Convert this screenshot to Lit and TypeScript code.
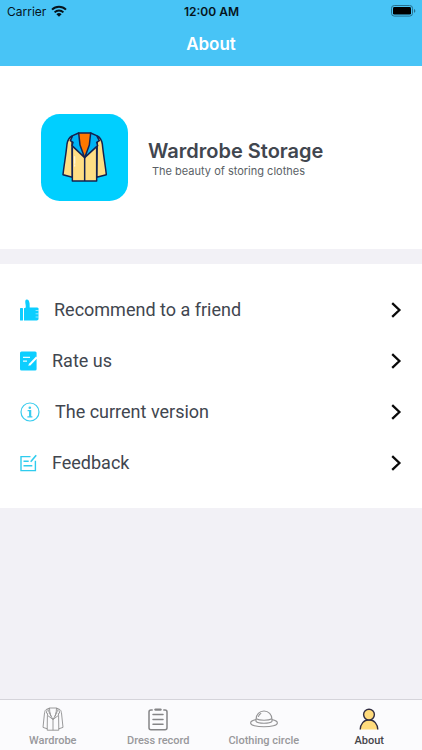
import { LitElement, html, css } from "lit";
import { customElement, state } from "lit/decorators.js";
import { classMap } from "lit/directives/class-map.js";

const wifiIcon = html`<svg width="16" height="12" viewBox="0 0 16 12" aria-hidden="true">
  <g fill="none" stroke="#06141c" stroke-width="2">
    <path d="M1 4.600a10 10 0 0 1 14 0" />
    <path d="M3.600 7.400a6.300 6.300 0 0 1 8.800 0" />
  </g>
  <path d="M5.400 9.200a3.800 3.800 0 0 1 5.200 0L8 11.800z" fill="#06141c" />
</svg>`;

const batteryIcon = html`<svg width="25" height="12" viewBox="0 0 25 12" aria-hidden="true">
  <rect x=".5" y=".5" width="21" height="10.600" rx="2.800" fill="none" stroke="#27708f" />
  <rect x="2" y="2" width="18" height="7.600" rx="1.400" fill="#000" />
  <path d="M23 4v3.800c.8-.3 1.300-1 1.300-1.900S23.800 4.300 23 4z" fill="#27708f" />
</svg>`;

const logo = html`<svg width="87" height="87" viewBox="33 29 261 261" aria-hidden="true">
  <rect x="33" y="29" width="261" height="261" rx="56" fill="#00cfff" />
  <g stroke="#15224f" stroke-width="4.500" stroke-linejoin="round" stroke-linecap="round">
    <path fill="#ffde84" d="M126 95c-10 5-13 13-15 24-3 32-9 64-12 92l28 8z" />
    <path fill="#ffde84" d="M202 95c10 5 13 13 15 24 3 32 9 64 12 92l-29 8z" />
    <path fill="#ffde84" stroke="none" d="M127 95l37 65 36-65v135h-73z" />
    <path fill="none" d="M127 130v100h73V130M164 158v72" />
    <path fill="#ff7800" stroke="none" d="M146 86h36l-4 36-14 33-14-33z" />
    <path fill="#00b4f5" d="M146 86l-18 8-7 15 8 5-3 10 38 36-14-38z" />
    <path fill="#00b4f5" d="M182 86l18 8 8 15-8 5 3 10-39 36 14-38z" />
    <path fill="none" d="M146 86h36" />
  </g>
  <path d="M134 157v20M134 182v3" stroke="#fff6d8" stroke-width="4" stroke-linecap="round" />
</svg>`;

const thumbIcon = html`<svg width="19" height="22" viewBox="0 0 19 22" aria-hidden="true">
  <g fill="#0cceff">
    <rect x="0" y="9" width="3" height="12.500" rx=".6" />
    <path d="M4 9.200l1.600-.4c.3-1 .2-2.200-.2-4.400C5 2 5.400.4 6.700.4c2.100 0 2.700 2.100 2.900 4.200l.1 3.800h7.300c1.500 0 1.900 1.200 1.500 2.200v9.200c0 1-.7 1.700-1.700 1.700H4z" />
  </g>
  <path d="M15.600 11.500H19M15.600 14.800H19M15.600 18H19" stroke="#b5f0ff" stroke-width=".8" />
</svg>`;

const rateIcon = html`<svg width="17" height="20" viewBox="0 0 17 20" aria-hidden="true">
  <rect x="0" y=".5" width="16.600" height="19" rx="1.500" fill="#0cceff" />
  <path d="M3 6.300h7M3 10.200h4" stroke="#e9fbff" stroke-width="1.200" />
  <path d="M16.800 6.200L9.600 13.800" stroke="#fff" stroke-width="2" />
  <path d="M9 12.600l1.700 1.500-2.300.8z" fill="#fff" />
</svg>`;

const infoIcon = html`<svg width="20" height="20" viewBox="0 0 20 20" aria-hidden="true">
  <circle cx="10" cy="10" r="9" fill="none" stroke="#3accee" stroke-width="1.200" />
  <circle cx="9.800" cy="5.800" r="1.300" fill="#3accee" />
  <path d="M7.600 8.700h3v6.100M7.400 14.800h5" fill="none" stroke="#3accee" stroke-width="1.300" />
  <path d="M9.900 8.700v6" stroke="#3accee" stroke-width="1.700" />
</svg>`;

const feedbackIcon = html`<svg width="17" height="18" viewBox="0 0 17 18" aria-hidden="true">
  <g fill="none" stroke="#2fccee" stroke-width="1.400">
    <path d="M10.500 2.600H1v14h14.400V6.800" />
    <path d="M3.500 7.300h5.200M3.500 11.800h8.800" />
    <path d="M10.700 7.800L16.200 1.200" stroke-width="1.600" />
  </g>
</svg>`;

const chevron = html`<svg width="11" height="16" viewBox="0 0 11 16" aria-hidden="true">
  <path d="M1.200 1.200L8.400 8l-7.200 6.800" fill="none" stroke="#0a0a0a" stroke-width="2.300" />
</svg>`;

const wardrobeTab = html`<svg width="22" height="24" viewBox="0 0 22 24" aria-hidden="true">
  <g fill="none" stroke="#8e8e90" stroke-width=".9" stroke-linejoin="round">
    <path d="M7.500 1L4 2.600C3 3.400 2.600 5 2.400 7L1 20.400l4.300 1.400M14.500 1L18 2.600c1 .8 1.400 2.400 1.600 4.400L21 20.400l-4.300 1.400" />
    <path d="M7.500 1h7M5.400 8.500l-.2 14.700h11.600l-.2-14.700M11 12.500v10.700" />
    <path d="M7.500 1L5 3.500 4.300 6l1.500.5-.5 1.700L11 12.500l5.700-4.300-.5-1.700 1.500-.5L17 3.500 14.500 1" />
    <path d="M7.500 1C7.500 6 9 9.500 11 12.500 13 9.500 14.500 6 14.500 1M6.300 3.200L9 9.500M15.700 3.200L13 9.500" />
  </g>
</svg>`;

const recordTab = html`<svg width="20" height="24" viewBox="0 0 20 24" aria-hidden="true">
  <g fill="none" stroke="#858587" stroke-width="1.500" stroke-linecap="round">
    <path d="M4.200 3H3a2 2 0 0 0-2 2v15.800a2 2 0 0 0 2 2h14a2 2 0 0 0 2-2V5a2 2 0 0 0-2-2h-1.200" />
    <path d="M5 7.600h10M5 12.400h10M5 17.200h10" />
    <path d="M7.500 2.600h5" stroke-width="2.400" />
  </g>
</svg>`;

const hatTab = html`<svg width="28" height="24" viewBox="0 0 28 24" aria-hidden="true">
  <g fill="none" stroke="#949496" stroke-width="1.100">
    <path d="M6 12.600C1.800 13.400.6 14.600.6 15.900c0 2.300 6 3.900 13.400 3.900s13.400-1.600 13.400-3.900c0-1.300-1.200-2.500-5.400-3.300" />
    <path d="M6 14.400v-2C6 7.600 9.500 4 14 4s8 3.600 8 8.400v2c-1 1.200-4.200 1.900-8 1.900s-7-.7-8-1.900z" />
    <path d="M6 11.800c2 1.100 4.800 1.500 8 1.500s6-.4 8-1.500M8.300 9.800c.5-1.600 1.400-2.700 2.900-3.500" />
  </g>
</svg>`;

const aboutTab = html`<svg width="20" height="24" viewBox="0 0 20 24" aria-hidden="true">
  <g fill="#ffdb7c" stroke="#302c42" stroke-width="1.400">
    <path d="M1.200 22.600C1.400 17 4.800 12.800 10 12.800S18.600 17 18.800 22.600" />
    <circle cx="10" cy="7.600" r="5.400" />
  </g>
</svg>`;

const rows = [
  { icon: thumbIcon, label: "Recommend to a friend" },
  { icon: rateIcon, label: "Rate us" },
  { icon: infoIcon, label: "The current version" },
  { icon: feedbackIcon, label: "Feedback" },
];

const tabs = [
  { icon: wardrobeTab, label: "Wardrobe" },
  { icon: recordTab, label: "Dress record" },
  { icon: hatTab, label: "Clothing circle" },
  { icon: aboutTab, label: "About" },
];

@customElement("app-root")
export class AppRoot extends LitElement {
  @state() private active = "About";

  static styles = css`
    :host {
      display: flex;
      flex-direction: column;
      min-height: 100vh;
      background: #f2f1f6;
      color: #41464f;
      font-family: Inter, "Liberation Sans", sans-serif;
    }
    svg {
      display: block;
      flex: none;
    }
    header {
      background: #48c4f6;
    }
    .status {
      display: grid;
      grid-template-columns: 1fr auto 1fr;
      align-items: center;
      height: 22px;
      padding: 0 6px 0 7px;
      font-size: 12px;
      color: #06141c;
    }
    .carrier {
      display: flex;
      align-items: center;
      gap: 5px;
    }
    .time {
      font-weight: 600;
    }
    .battery {
      justify-self: end;
    }
    .title {
      margin: 0;
      font-size: 17px;
      line-height: 44px;
      font-weight: 600;
      text-align: center;
      color: #fff;
    }
    .hero {
      display: flex;
      align-items: center;
      gap: 20px;
      padding: 48px 41px;
      background: #fff;
    }
    .name {
      margin: 0;
      font-size: 20px;
      line-height: 26px;
      font-weight: 600;
    }
    .tagline {
      margin: 0 4px;
      font-size: 11px;
      line-height: 14px;
      color: #5a5f66;
    }
    .list {
      margin: 15px 0 0;
      padding: 20px 0;
      list-style: none;
      background: #fff;
    }
    button {
      border: 0;
      background: none;
      font-family: Roboto, "Liberation Sans", sans-serif;
      color: inherit;
      cursor: pointer;
    }
    .row {
      display: flex;
      align-items: center;
      gap: 15px;
      width: 100%;
      height: 51px;
      padding: 0 20px;
      font-size: 18px;
      text-align: left;
    }
    .label {
      flex: 1;
    }
    .tabs {
      display: grid;
      grid-template-columns: repeat(4, 1fr);
      margin-top: auto;
      border-top: 1px solid #d5d4da;
      background: #fbfbfd;
    }
    .tab {
      display: flex;
      flex-direction: column;
      align-items: center;
      gap: 2px;
      padding: 7px 0 1px;
      font-size: 11px;
      line-height: 16px;
      font-weight: 500;
      color: #98989b;
    }
    .tab.on {
      color: #464549;
    }
  `;

  render() {
    return html`
      <header>
        <div class="status">
          <span class="carrier">Carrier ${wifiIcon}</span>
          <span class="time">12:00 AM</span>
          <span class="battery">${batteryIcon}</span>
        </div>
        <h1 class="title">About</h1>
      </header>
      <section class="hero">
        ${logo}
        <div>
          <h2 class="name">Wardrobe Storage</h2>
          <p class="tagline">The beauty of storing clothes</p>
        </div>
      </section>
      <ul class="list">
        ${rows.map(
          (r) => html`<li>
            <button class="row">${r.icon}<span class="label">${r.label}</span>${chevron}</button>
          </li>`
        )}
      </ul>
      <nav class="tabs">
        ${tabs.map(
          (t) => html`<button
            class=${classMap({ tab: true, on: t.label === this.active })}
            @click=${() => (this.active = t.label)}
          >
            ${t.icon}<span>${t.label}</span>
          </button>`
        )}
      </nav>
    `;
  }
}
